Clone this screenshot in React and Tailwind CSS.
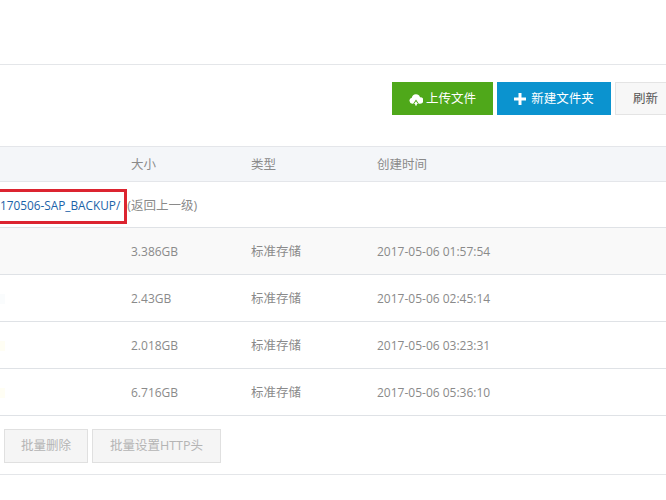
const font = { fontFamily: '"Open Sans", "Noto Sans CJK SC", sans-serif' };

const rows = [
  { size: '3.386GB', date: '2017-05-06 01:57:54', bg: 'bg-[#f9f9f9]', tint: '' },
  { size: '2.43GB', date: '2017-05-06 02:45:14', bg: 'bg-white', tint: 'bg-[#fafcfd]' },
  { size: '2.018GB', date: '2017-05-06 03:23:31', bg: 'bg-white', tint: 'bg-[#fffef4]' },
  { size: '6.716GB', date: '2017-05-06 05:36:10', bg: 'bg-white', tint: 'bg-[#fffef4]' },
];

const Row = ({ size, date, bg, tint }) => (
  <div className={`grid grid-cols-[131px_120px_126px_1fr] items-center h-[47px] pt-[2px] border-b border-[#dfe2e6] ${bg}`}>
    <div className={`w-[5px] h-[10px] ${tint}`} />
    <div className="text-[12px]">{size}</div>
    <div>标准存储</div>
    <div className="text-[12px]">{date}</div>
  </div>
);

export default function App() {
  return (
    <div style={font} className="w-[666px] h-[500px] overflow-hidden bg-white text-[12.5px] text-[#8a8a8a]">
      <div className="h-[65px] border-b border-[#e4e6e9]" />

      <div className="flex justify-end gap-[4px] h-[81px] pt-[17px] -mr-[9px]">
        <button className="flex items-center justify-center gap-[3px] w-[101px] h-[33px] pt-[2px] bg-[#4fa81a] text-white">
          <svg className="-mt-[1px]" width="14" height="13" viewBox="0 0 15 13" fill="#fff">
            <path d="M3.5 11A3.3 3.3 0 0 1 3 4.5 4.6 4.6 0 0 1 11.8 4a3.5 3.5 0 0 1 .2 7h-1.5L7.5 6.5 4.5 11z" />
            <path d="M7.5 8.5 9.6 11.4H8.4V13H6.6v-1.6H5.4z" />
          </svg>
          上传文件
        </button>
        <button className="flex items-center justify-center gap-[5px] w-[114px] h-[33px] pt-[2px] bg-[#0b93cf] text-white">
          <svg className="-mt-[2px]" width="12" height="12" viewBox="0 0 12 12" fill="#fff">
            <path d="M4.5 0h3v4.5H12v3H7.5V12h-3V7.5H0v-3h4.5z" />
          </svg>
          新建文件夹
        </button>
        <button className="w-[60px] h-[33px] pt-[2px] bg-[#f7f7f7] border border-[#e4e4e4] text-[#555] text-left pl-[17px]">
          刷新
        </button>
      </div>

      <div className="grid grid-cols-[131px_120px_126px_1fr] items-center h-[36px] pt-[2px] bg-[#f4f6f9] border-y border-[#e4e6ea]">
        <div />
        <div>大小</div>
        <div>类型</div>
        <div>创建时间</div>
      </div>

      <div className="flex items-start h-[46px] pt-[7px] border-b border-[#dfe2e6]">
        <span className="flex items-center h-[35px] -ml-[6px] pl-[3px] pr-[4px] pb-[2px] border-[3px] border-[#dc2430] text-[11.8px] text-[#1a62a8] whitespace-nowrap">
          170506-SAP_BACKUP/
        </span>
        <span className="flex items-center h-[35px] pb-[1px]">(返回上一级)</span>
      </div>

      {rows.map((r) => (
        <Row key={r.date} {...r} />
      ))}

      <div className="flex gap-[4px] h-[59px] pt-[13px] pl-[4px] border-b border-[#e4e6e9] text-[#b4b4b4]">
        <button className="w-[84px] h-[34px] bg-[#f5f5f5] border border-[#e0e0e0]">批量删除</button>
        <button className="w-[129px] h-[34px] bg-[#f5f5f5] border border-[#e0e0e0]">批量设置HTTP头</button>
      </div>
    </div>
  );
}
